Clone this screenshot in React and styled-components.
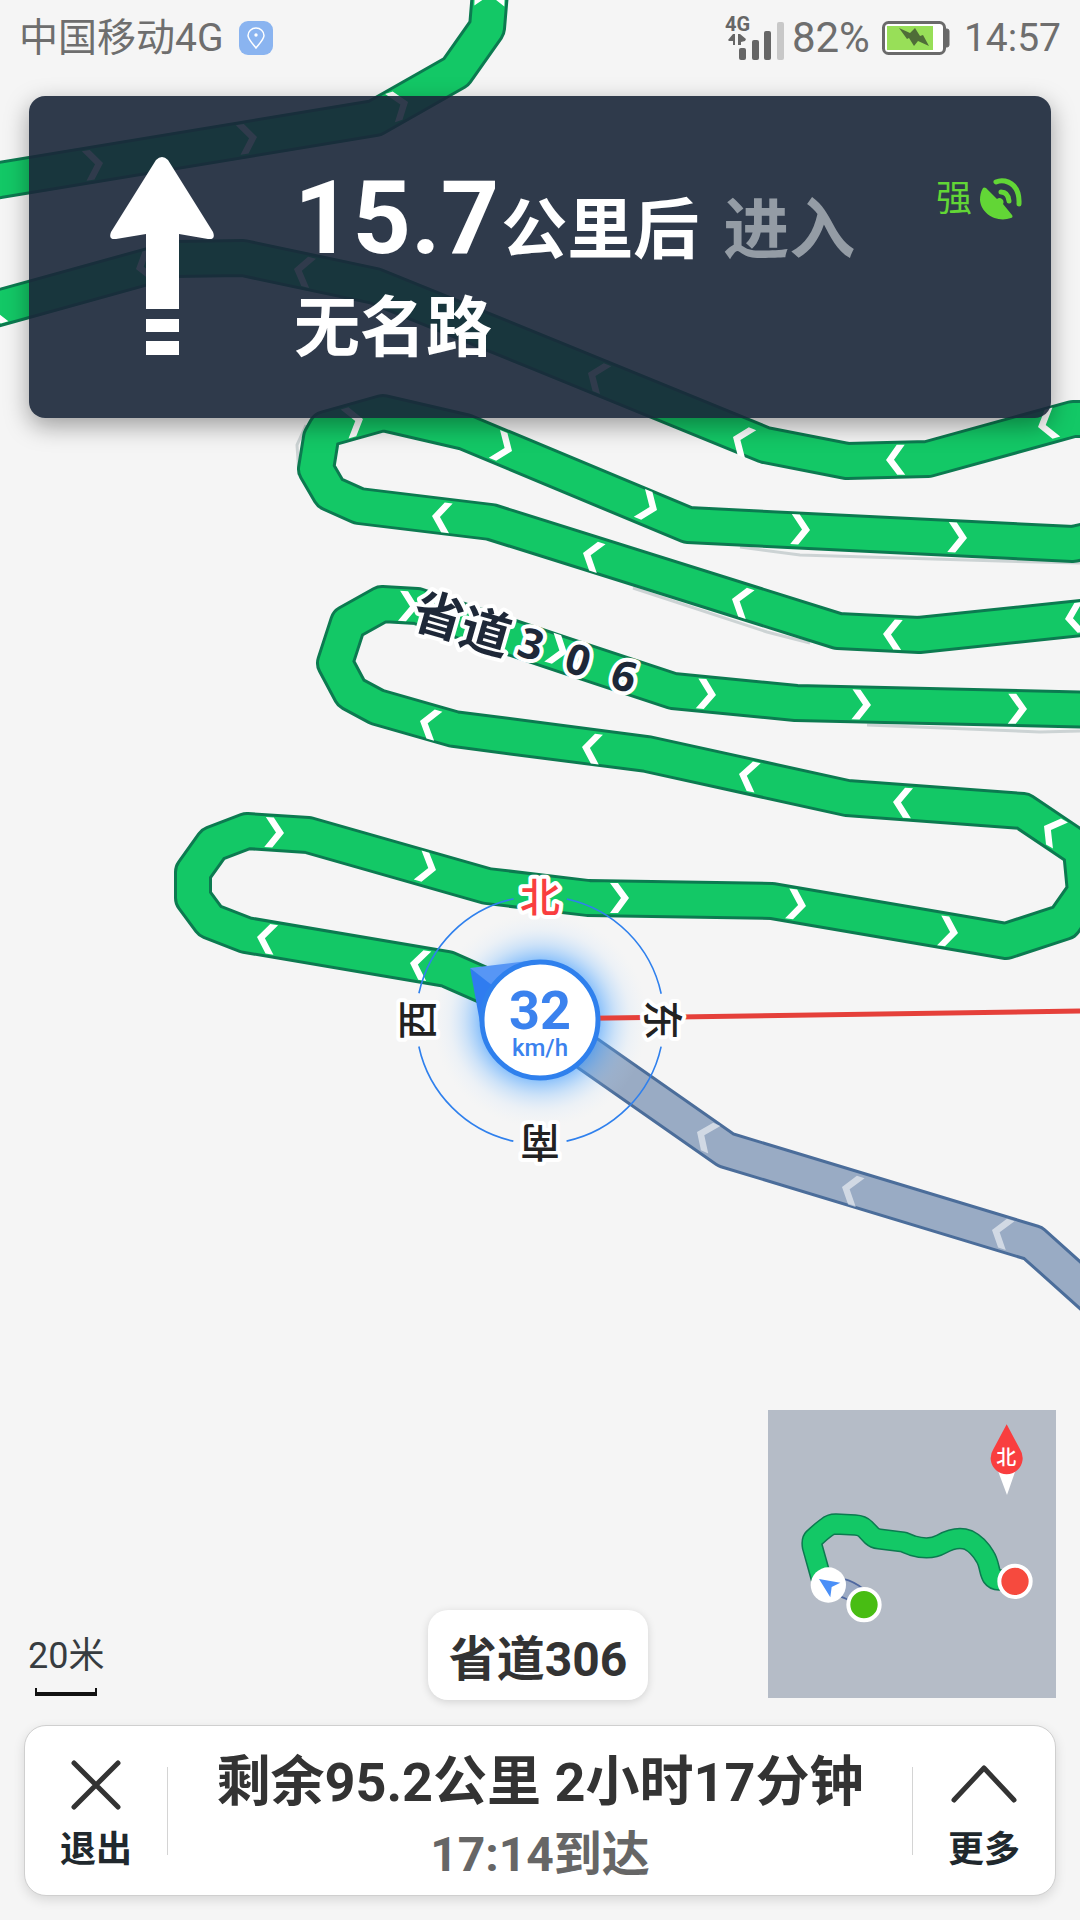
import React from 'react';
import styled, { createGlobalStyle } from 'styled-components';

const theme = {
  fonts: {
    main: 'Roboto, "Noto Sans CJK SC", sans-serif',
    map: '"Open Sans", "Noto Sans CJK SC", sans-serif',
  },
  colors: {
    land: '#f5f5f5',
    route: '#13c866',
    routeEdge: '#0c7a50',
    passed: '#99abc4',
    passedEdge: '#4b6d9a',
    blue: '#2f80ed',
    red: '#f93e3f',
    status: '#6e6e6e',
    text: '#333',
    label: '#20282d',
    signal: '#62d636',
  },
};

const GlobalStyle = createGlobalStyle`
  body {
    margin: 0;
    background: ${theme.colors.land};
    font-family: ${theme.fonts.main};
  }

  button {
    font-family: inherit;
  }
`;

const Screen = styled.main`
  position: relative;
  display: flex;
  flex-direction: column;
  min-height: 100vh;
  overflow: hidden;
`;

const MapCanvas = styled.svg`
  position: absolute;
  inset: 0;
  width: 100%;
  height: 100%;
`;

const MapLabel = styled.text`
  font-family: ${theme.fonts.map};
  font-size: ${({ $digit }) => ($digit ? '42px' : '50px')};
  font-weight: 700;
  text-anchor: middle;
  fill: #1e2838;
  stroke: #fff;
  stroke-width: 8px;
  stroke-linejoin: round;
  paint-order: stroke;
`;

const CompassLabel = styled.text`
  font-family: ${theme.fonts.main};
  font-size: 40px;
  font-weight: 500;
  text-anchor: middle;
  fill: ${({ $north }) => ($north ? theme.colors.red : '#222')};
  stroke: #fff;
  stroke-width: 8px;
  stroke-linejoin: round;
  paint-order: stroke;
`;

const SpeedText = styled.text`
  font-family: ${theme.fonts.main};
  font-size: ${({ $unit }) => ($unit ? '24px' : '54px')};
  font-weight: ${({ $unit }) => ($unit ? 500 : 700)};
  text-anchor: middle;
  fill: #3b82ee;
`;

const StatusBar = styled.header`
  position: relative;
  display: flex;
  align-items: center;
  justify-content: space-between;
  height: 76px;
  padding: 0 19px;
  color: ${theme.colors.status};
`;

const StatusGroup = styled.div`
  display: flex;
  align-items: center;
  gap: ${({ $gap }) => $gap}px;
`;

const StatusText = styled.span`
  font-size: ${({ $size }) => $size}px;
  line-height: 48px;
`;

const LocationBadge = styled.span`
  display: flex;
  align-items: center;
  justify-content: center;
  width: 34px;
  height: 34px;
  border-radius: 9px;
  background: #8ab4f0;
`;

const Banner = styled.section`
  position: relative;
  display: flex;
  align-items: flex-start;
  gap: 80px;
  margin: 20px 29px 0;
  padding: 61px 28px 47px 81px;
  border-radius: 16px;
  background: rgba(25, 38, 56, 0.9);
  box-shadow: 0 8px 24px rgba(0, 0, 0, 0.36);
  color: #fff;
`;

const Instruction = styled.div`
  flex: 1;
  margin-block-start: 5px;
  font-weight: 700;
`;

const DistanceLine = styled.div`
  display: flex;
  align-items: baseline;
  line-height: 112px;
`;

const Distance = styled.span`
  margin-inline-end: 2px;
  font-size: 102px;
`;

const RoadText = styled.span`
  font-size: 66px;
  margin-inline-start: ${({ $muted }) => ($muted ? '24px' : '0')};
  color: ${({ $muted }) => ($muted ? '#949ca5' : '#fff')};
`;

const RoadLine = styled.div`
  font-size: 66px;
  line-height: 84px;
`;

const Gps = styled.div`
  display: flex;
  align-items: center;
  gap: 8px;
  margin-block-start: 18px;
  color: ${theme.colors.signal};
  font-size: 36px;
  line-height: 48px;
`;

const BottomRow = styled.div`
  position: relative;
  display: grid;
  grid-template-columns: 1fr auto 1fr;
  align-items: end;
  margin-block-start: auto;
  padding: 0 24px 25px 20px;
`;

const Scale = styled.div`
  justify-self: start;
  margin-inline-start: 8px;
  color: #373c40;
  font-size: 36px;
  line-height: 48px;
`;

const ScaleBar = styled.div`
  width: 62px;
  height: 8px;
  margin: 8px auto 4px;
  box-sizing: border-box;
  border: solid #111;
  border-width: 0 2px 4px;
`;

const RoadChip = styled.div`
  padding: 10px 21px 0;
  border-radius: 20px;
  background: #fff;
  box-shadow: 0 2px 8px rgba(0, 0, 0, 0.14);
  color: ${theme.colors.text};
  font-size: 48px;
  font-weight: 700;
  line-height: 80px;
`;

const MiniMap = styled.svg`
  justify-self: end;
  display: block;
  width: 288px;
  height: 288px;
  margin-block-end: 2px;
  background: #b5bcc7;
`;

const MiniLabel = styled.text`
  font-family: ${theme.fonts.main};
  font-size: 60px;
  font-weight: 500;
  text-anchor: middle;
  fill: #fff;
`;

const TripCard = styled.footer`
  position: relative;
  display: flex;
  align-items: center;
  box-sizing: border-box;
  height: 171px;
  margin: 0 24px 24px;
  border: 1px solid #cfcfcf;
  border-radius: 22px;
  background: #fff;
  box-shadow: 0 4px 12px rgba(0, 0, 0, 0.12);
`;

const CardButton = styled.button`
  display: flex;
  flex-direction: column;
  align-items: center;
  gap: 16px;
  width: 142px;
  padding: 12px 0 0;
  border: 0;
  background: none;
  color: ${theme.colors.label};
  font-size: 36px;
  font-weight: 700;
  line-height: 48px;
  cursor: pointer;
`;

const Divider = styled.span`
  width: 1px;
  height: 88px;
  background: #d4d4d4;
`;

const Trip = styled.div`
  flex: 1;
  padding-block-start: 14px;
  text-align: center;
  font-weight: 700;
`;

const Remaining = styled.div`
  color: ${theme.colors.text};
  font-size: 54px;
  line-height: 74px;
`;

const Arrival = styled.div`
  color: #666;
  font-size: 48px;
  line-height: 70px;
`;

const ghostRoads = [
  'M740 547 L800 555 L1000 561 L1080 563',
  'M633 588 L767 632 L810 643',
  'M867 725 L1040 732 L1080 731',
  'M299 475 L297 445 L306 425',
];

const routes = [
  'M-20 183 L0 180 L375 118 L456 72 L487 28 L491 -20',
  'M1100 419 L1073 419 L928 459 L847 461 L765 445 L540 353 L375 286 L243 258 L175 259 L-20 313',
  'M1100 538 L1073 544 L688 525 L465 432 L383 413 L326 429 L321 438 L316 469 L330 493 L359 506 L491 522 L838 631 L919 635 L1100 616',
  'M1100 710 L796 703 L673 691 L567 656 L417 606 L382 604 L348 623 L335 663 L351 693 L377 707 L454 729 L647 754 L847 798 L1023 811 L1081 850 L1085 892 L1064 922 L1006 941 L772 901 L588 898 L487 886 L308 835 L247 831 L213 844 L193 872 L193 898 L210 921 L246 935 L447 969 L540 1010',
];

const passedRoute = 'M540 1020 L726 1150 L1033 1243 L1110 1312';

// tip x, tip y, heading in degrees
const chevrons = [
  [103, 163, -9], [257, 137, -9], [408, 102, -19], [490, -13, -88],
  [-14, 312, 164], [136, 269, 164], [294, 269, 193], [588, 373, 202],
  [733, 437, 202], [886, 460, 179], [1038, 427, 165],
  [363, 419, -15], [512, 451, 22], [657, 510, 22], [810, 530, 3], [967, 538, 3],
  [432, 516, 187], [583, 553, 197], [732, 599, 197], [883, 634, 183], [1065, 619, 174],
  [418, 607, 4], [567, 653, 18], [716, 695, 5], [871, 705, 2], [1027, 709, 1],
  [420, 721, 196], [582, 747, 188], [739, 774, 192], [893, 802, 184], [1044, 826, 210],
  [284, 833, 3], [436, 870, 15], [629, 898, 0], [806, 906, 8], [958, 933, 8],
  [257, 937, 189], [410, 963, 190],
];

const passedChevrons = [[697, 1132, 204], [842, 1187, 197], [992, 1230, 197]];

const roadLabel = [
  ['省', 439, 615, 16], ['道', 486, 631, 16], ['3', 531, 644, 17], ['0', 578, 660, 17], ['6', 624, 676, 17],
];

const compassPoints = [['北', 0], ['东', 90], ['南', 180], ['西', 270]];

const Chevron = ({ at: [x, y, angle], opacity = 1 }) => (
  <path
    d="M-19 -15 H-11 L0 0 L-11 15 H-19 L-8 0 Z"
    transform={`translate(${x} ${y}) rotate(${angle})`}
    fill="#fff"
    opacity={opacity}
  />
);

const Road = ({ d, fill, edge, width = 38, border = 6 }) => (
  <g fill="none" strokeLinejoin="round">
    <path d={d} stroke={edge} strokeWidth={width} />
    <path d={d} stroke={fill} strokeWidth={width - border} />
  </g>
);

const NavigationMap = () => (
  <MapCanvas viewBox="0 0 1080 1920" preserveAspectRatio="xMidYMin slice" role="img" aria-label="导航地图">
    <defs>
      <radialGradient id="glow">
        <stop offset="0.56" stopColor="#3d9bff" stopOpacity="0.55" />
        <stop offset="0.7" stopColor="#6db5ff" stopOpacity="0.3" />
        <stop offset="0.84" stopColor="#a8d2ff" stopOpacity="0.12" />
        <stop offset="1" stopColor="#d5e8ff" stopOpacity="0" />
      </radialGradient>
    </defs>

    {ghostRoads.map((d) => (
      <path key={d} d={d} fill="none" stroke="#ccd3d4" strokeWidth="3" />
    ))}
    <Road d={passedRoute} fill={theme.colors.passed} edge={theme.colors.passedEdge} />
    <circle cx="540" cy="1020" r="108" fill="url(#glow)" />
    {routes.map((d) => (
      <Road key={d} d={d} fill={theme.colors.route} edge={theme.colors.routeEdge} />
    ))}
    {chevrons.map((at) => (
      <Chevron key={at.join()} at={at} />
    ))}
    {passedChevrons.map((at) => (
      <Chevron key={at.join()} at={at} opacity={0.55} />
    ))}
    {roadLabel.map(([char, x, y, angle]) => (
      <MapLabel
        key={char}
        $digit={char < 'A'}
        transform={`translate(${x} ${y}) rotate(${angle})`}
        y={char < 'A' ? 15 : 19}
      >
        {char}
      </MapLabel>
    ))}

    <path d="M540 1019 L1080 1011" stroke="#e5403a" strokeWidth="5" />

    <g transform="translate(540 1020)">
      <circle
        r="124"
        fill="none"
        stroke={theme.colors.blue}
        strokeWidth="1.6"
        strokeDasharray="141.1 53.7"
        strokeDashoffset="-26.8"
      />
      {compassPoints.map(([char, angle]) => (
        <CompassLabel key={char} $north={angle === 0} transform={`rotate(${angle})`} y="-108">
          {char}
        </CompassLabel>
      ))}
      <path d="M-70 -52 L-59 8 L-30 0 L-45 -34 Z" fill="#2f7cf0" />
      <path d="M-70 -52 L-12 -59 L-20 -20 L-47 -34 Z" fill="#5796f5" />
      <circle r="58" fill="#fff" stroke={theme.colors.blue} strokeWidth="5" />
      <SpeedText y="9">32</SpeedText>
      <SpeedText $unit y="36">km/h</SpeedText>
    </g>
  </MapCanvas>
);

const PinIcon = () => (
  <svg width="18" height="22" viewBox="0 0 18 22" fill="none" stroke="#fff" strokeWidth="1.5" aria-hidden="true">
    <path d="M9 21 C5 16 1 12 1 8.500 A8 7.500 0 0 1 17 8.500 C17 12 13 16 9 21 Z" />
    <circle cx="9" cy="8" r="1.700" fill="#fff" stroke="none" />
  </svg>
);

const SignalText = styled.text`
  font-family: ${theme.fonts.main};
  font-size: 20px;
  font-weight: 700;
  fill: #666;
`;

const SignalIcon = () => (
  <svg width="59" height="54" viewBox="0 -5 59 54" aria-hidden="true">
    <SignalText x="0" y="15">4G</SignalText>
    <path d="M3 24 L8 18 H10 V29 H8 V25 H4 Z M13 18 H15 L21 23 L20 25 L16 26 V29 H13 Z" fill="#666" />
    <rect x="14" y="32" width="7" height="12" rx="2" fill="#666" />
    <rect x="27" y="24" width="7" height="20" rx="2" fill="#666" />
    <rect x="39" y="15" width="7" height="29" rx="2" fill="#666" />
    <rect x="52" y="6" width="7" height="38" rx="2" fill="#c8c8c8" />
  </svg>
);

const BatteryIcon = () => (
  <svg width="68" height="34" viewBox="0 0 68 34" aria-hidden="true">
    <rect x="1.500" y="1.500" width="61" height="31" rx="5" fill="#fff" stroke="#6a6a6a" strokeWidth="3" />
    <rect x="5" y="5" width="46" height="24" fill="#98df58" />
    <path d="M64 8 h1 q2 0 2 2 v14 q0 2 -2 2 h-1 Z" fill="#6a6a6a" stroke="#6a6a6a" />
    <path d="M17 7 L28 12 L33 7 L38 15 L41 14 L47 25 L36 20 L32 25 L27 17 L25 18 Z" fill="#4f6d38" />
  </svg>
);

const StraightArrow = () => (
  <svg width="104" height="198" viewBox="0 0 104 198" fill="#fff" role="img" aria-label="直行">
    <path d="M46 3 Q52 -3 58 3 L103 75 Q106 83 98 82 L69 77 V152 H36 V77 L6 82 Q-2 83 1 75 Z" />
    <path d="M36 162 H69 V175 H36 Z M36 184 H69 V198 H36 Z" />
  </svg>
);

const DishIcon = () => (
  <svg width="43" height="43" viewBox="0 0 43 43" fill="none" stroke={theme.colors.signal} strokeWidth="5" strokeLinecap="round" aria-hidden="true">
    <path d="M6 10 L17 21 A4 4 0 0 1 23 26 L32 37 A2 2 0 0 1 31 40 C17 45 1 36 0 22 Q0 15 3 10 Q4 9 6 10 Z" fill={theme.colors.signal} stroke="none" />
    <path d="M21 14 Q28 14 29 23" />
    <path d="M16 4 Q20 2 25 3 Q40 7 39 26" />
  </svg>
);

const CloseIcon = () => (
  <svg width="50" height="50" viewBox="0 0 50 50" fill="none" stroke="#333" strokeWidth="5" strokeLinecap="round" aria-hidden="true">
    <path d="M3 3 L47 47 M47 3 L3 47" />
  </svg>
);

const MoreIcon = () => (
  <svg width="66" height="50" viewBox="0 0 66 50" fill="none" stroke="#333" strokeWidth="5" strokeLinecap="round" strokeLinejoin="round" aria-hidden="true">
    <path d="M3 40 L33 8 L63 40" />
  </svg>
);

const Overview = () => (
  <MiniMap viewBox="54 60 864 864" role="img" aria-label="路线全览">
    <Road
      d="M235 590 Q300 585 345 640"
      fill="#9dabc4"
      edge="#4f68a0"
      width={58}
      border={10}
    />
    <Road
      d="M215 570 L187 470 Q184 452 190 446 Q220 418 230 412 Q242 402 257 402 L315 405 Q335 406 346 417 L365 437 Q374 445 388 447 L460 456 L488 467 Q540 482 575 462 Q620 437 655 450 Q685 465 705 500 C725 530 712 572 750 570 L790 572"
      fill={theme.colors.route}
      edge={theme.colors.routeEdge}
      width={64}
      border={9}
    />
    <circle cx="235" cy="585" r="53" fill="#fff" />
    <path d="M207 567 L271 578 L245 591 L241 622 Z" fill="#4a8ff7" />
    <circle cx="342" cy="644" r="47" fill="#48bd13" stroke="#fff" strokeWidth="12" />
    <circle cx="795" cy="574" r="47" fill="#f64a3e" stroke="#fff" strokeWidth="12" />
    <path d="M743 240 H797 L771 315 Z" fill="#fff" />
    <path d="M770 103 L810 178 A48 48 0 1 1 730 178 Z" fill={theme.colors.red} />
    <MiniLabel x="769" y="226">北</MiniLabel>
  </MiniMap>
);

const App = () => {
  return (
    <>
      <GlobalStyle />
      <Screen>
        <NavigationMap />

        <StatusBar>
          <StatusGroup $gap={16}>
            <StatusText $size={39}>中国移动4G</StatusText>
            <LocationBadge>
              <PinIcon />
            </LocationBadge>
          </StatusGroup>
          <StatusGroup $gap={14}>
            <StatusGroup $gap={12}>
              <StatusGroup $gap={8}>
                <SignalIcon />
                <StatusText $size={42}>82%</StatusText>
              </StatusGroup>
              <BatteryIcon />
            </StatusGroup>
            <StatusText $size={39}>14:57</StatusText>
          </StatusGroup>
        </StatusBar>

        <Banner>
          <StraightArrow />
          <Instruction>
            <DistanceLine>
              <Distance>15.7</Distance>
              <RoadText>公里后</RoadText>
              <RoadText $muted>进入</RoadText>
            </DistanceLine>
            <RoadLine>无名路</RoadLine>
          </Instruction>
          <Gps>
            <span>强</span>
            <DishIcon />
          </Gps>
        </Banner>

        <BottomRow>
          <Scale>
            20米
            <ScaleBar />
          </Scale>
          <RoadChip>省道306</RoadChip>
          <Overview />
        </BottomRow>

        <TripCard>
          <CardButton type="button">
            <CloseIcon />
            退出
          </CardButton>
          <Divider />
          <Trip>
            <Remaining>剩余95.2公里 2小时17分钟</Remaining>
            <Arrival>17:14到达</Arrival>
          </Trip>
          <Divider />
          <CardButton type="button">
            <MoreIcon />
            更多
          </CardButton>
        </TripCard>
      </Screen>
    </>
  );
};

export default App;
